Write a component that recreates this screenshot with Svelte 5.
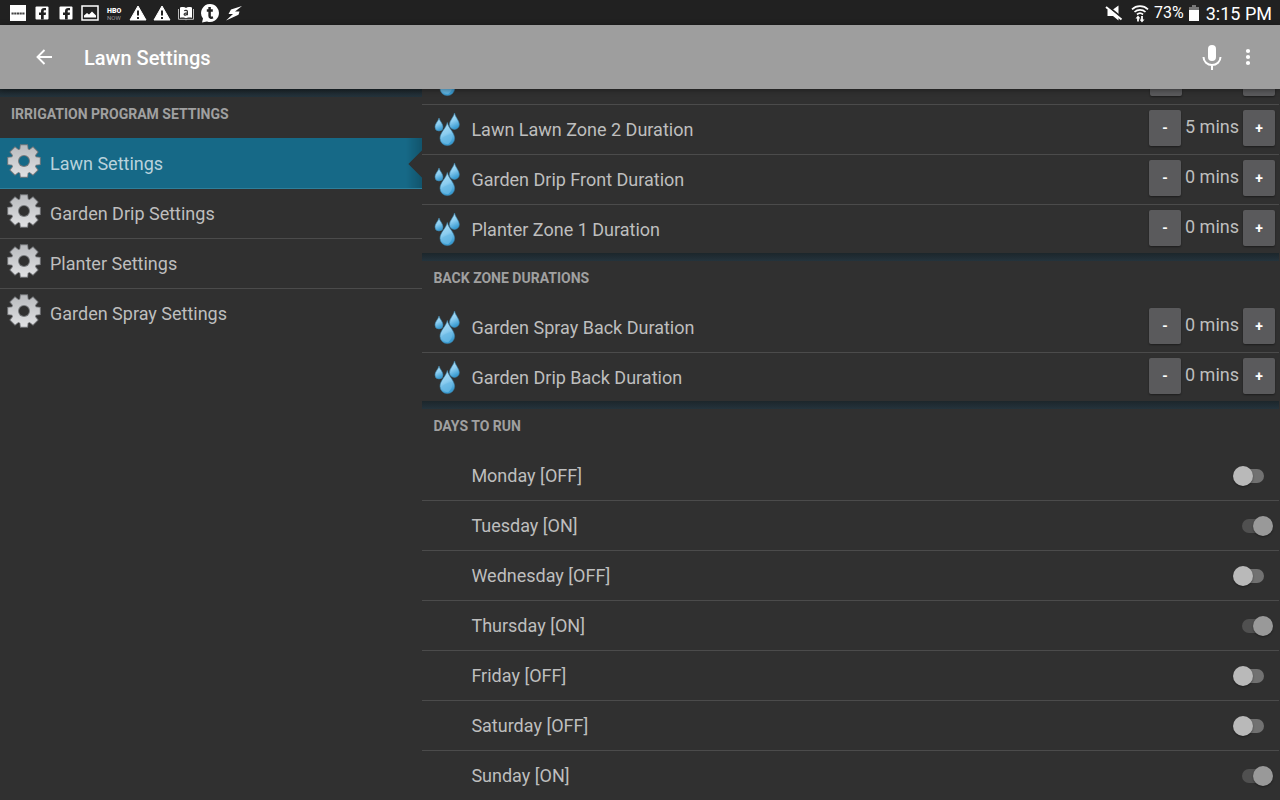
<script>
  const programs = ['Lawn Settings', 'Garden Drip Settings', 'Planter Settings', 'Garden Spray Settings'];
  let selected = $state('Lawn Settings');

  let groups = $state([
    {
      title: '',
      zones: [
        { name: '', mins: 0 },
        { name: 'Lawn Lawn Zone 2 Duration', mins: 5 },
        { name: 'Garden Drip Front Duration', mins: 0 },
        { name: 'Planter Zone 1 Duration', mins: 0 }
      ]
    },
    {
      title: 'BACK ZONE DURATIONS',
      zones: [
        { name: 'Garden Spray Back Duration', mins: 0 },
        { name: 'Garden Drip Back Duration', mins: 0 }
      ]
    }
  ]);

  let days = $state([
    { name: 'Monday', on: false },
    { name: 'Tuesday', on: true },
    { name: 'Wednesday', on: false },
    { name: 'Thursday', on: true },
    { name: 'Friday', on: false },
    { name: 'Saturday', on: false },
    { name: 'Sunday', on: true }
  ]);

  const teeth = [0, 45, 90, 135, 180, 225, 270, 315];
</script>

<svg class="defs" width="0" height="0" aria-hidden="true">
  <defs>
    <linearGradient id="metal" x1="0" y1="0" x2="0" y2="1">
      <stop offset="0" stop-color="#b6b8bb" />
      <stop offset="1" stop-color="#e2e3e5" />
    </linearGradient>
    <linearGradient id="water" x1="0" y1="0" x2="0.3" y2="1">
      <stop offset="0" stop-color="#b5e2f7" />
      <stop offset="0.55" stop-color="#8ccdf0" />
      <stop offset="1" stop-color="#3a9cd2" />
    </linearGradient>
    <mask id="rim" maskUnits="userSpaceOnUse" x="0" y="0" width="36" height="36">
      <circle cx="18" cy="18" r="13" fill="#fff" />
      {#each teeth as a}
        <path d="M13.300 8 L14 1.200 H22 L22.700 8Z" fill="#fff" transform="rotate({a} 18 18)" />
      {/each}
      <circle cx="18" cy="18" r="5" fill="#000" />
    </mask>
    <mask id="face" maskUnits="userSpaceOnUse" x="0" y="0" width="36" height="36">
      <circle cx="18" cy="18" r="12.300" fill="#fff" />
      {#each teeth as a}
        <path d="M14 8 L14.800 2.200 H21.200 L22 8Z" fill="#fff" transform="rotate({a} 18 18)" />
      {/each}
      <circle cx="18" cy="18" r="6" fill="#000" />
    </mask>
  </defs>
</svg>

{#snippet gear()}
  <svg class="gear" width="36" height="36" viewBox="0 0 36 36" aria-hidden="true">
    <rect width="36" height="36" fill="#77797c" mask="url(#rim)" />
    <rect width="36" height="36" fill="url(#metal)" mask="url(#face)" />
  </svg>
{/snippet}

{#snippet drops()}
  <svg class="drops" width="28" height="36" viewBox="0 0 28 36" aria-hidden="true">
    <g fill="url(#water)" stroke="#3b85ad" stroke-width="0.6">
      <path d="M6 6 C5.4 9 2 11.500 2 15 a4 4 0 0 0 8 0 C10 11.500 6.600 9 6 6Z" />
      <path d="M21.500 1 C20.800 5 16.500 8.500 16.500 12.500 a4.900 4.900 0 0 0 9.800 0 C26.300 8.500 22.200 5 21.500 1Z" />
      <path d="M14.300 10.500 C13.300 16 7 20.500 7 26.300 a7.300 7.300 0 0 0 14.600 0 C21.600 20.500 15.300 16 14.300 10.500Z" />
    </g>
    <path d="M8.500 27 a5.800 5.800 0 0 0 7 5 C19 29 20 25 18.500 22 C15 23 11 24 8.500 27Z" fill="#6cbbe6" opacity="0.7" />
  </svg>
{/snippet}

<div class="screen">
  <div class="status">
    <div class="notices">
      <svg width="16" height="18" viewBox="0 0 16 18"><path fill="#fff" d="M0 1h16v16H0z" /><path d="M1.500 9.500h13" stroke="#444" stroke-width="1.800" stroke-dasharray="2.200 .5" /></svg>
      {#each [1, 2] as n (n)}
        <svg width="16" height="18" viewBox="0 0 16 18"><rect x="1.500" y="2.500" width="13" height="13" rx="1" fill="#fff" /><path d="M7 15.500V11H5V8.600h2V7.200C7 5 8.200 4 10.200 4H12v2.300h-1.300c-.8 0-1 .4-1 1v1.300H12L11.700 11h-2v4.500z" fill="#222" /></svg>
      {/each}
      <svg width="18" height="18" viewBox="0 0 18 18"><rect x="1" y="2" width="16" height="14" fill="none" stroke="#fff" stroke-width="1.500" /><path d="M3 13.500V11.500l3-2.500 2 1.500L11 7.500l4 4v2z" fill="#fff" /></svg>
      <svg width="16" height="18" viewBox="0 0 16 18" font-family="Roboto, sans-serif" fill="#fff"><text x="1" y="9" font-size="7" font-weight="900">HBO</text><text x="1" y="16" font-size="6" fill="#999">NOW</text></svg>
      {#each [1, 2] as n (n)}
        <svg width="18" height="18" viewBox="0 0 18 18"><path d="M9 2 17 16H1z" fill="#fff" stroke="#fff" stroke-linejoin="round" /><path d="M9 6.500v5M9 13v2" stroke="#222" stroke-width="2" /></svg>
      {/each}
      <svg width="18" height="18" viewBox="0 0 18 18"><path d="M1.500 5v10.300H8l1 .7 1-.7h6.500V5" fill="none" stroke="#bbb" /><path d="M3 3.500c3-.8 5-.5 6 .5 1-1 3-1.300 6-.5v10.200c-3-.6-5-.2-6 .7-1-.9-3-1.300-6-.7z" fill="#fff" /><path d="M7.200 6.800c1.200-.8 3.200-.5 3.200.8v3.600M10.400 8.800c-3.800-.2-4 2.500-2 2.300l2-.8" fill="none" stroke="#333" stroke-width="1.200" /></svg>
      <svg width="20" height="20" viewBox="0 0 20 20"><path d="M10 1a9 9 0 1 1-3 17.500L2 19.500 3 15.500A9 9 0 0 1 10 1z" fill="#fff" /><path d="M9.600 4v9c0 1.800 1.500 2 3.400 1.400M6.800 7.600h6" fill="none" stroke="#222" stroke-width="2.500" /></svg>
      <svg width="18" height="18" viewBox="0 0 18 18"><path d="M17 2 6 5.500 3.500 10H8L1 16.500 13.500 10.800 14.500 7.500H10z" fill="#fff" /></svg>
    </div>
    <div class="system">
      <svg width="18" height="18" viewBox="0 0 18 18"><path d="M2.500 5.500H8l5.500-4v15L8 12H2.500z" fill="#fff" /><path d="M2 1.500 17.500 14.500" stroke="#222" stroke-width="2" /><path d="M1 3 16.500 15.500" stroke="#fff" stroke-width="2" /></svg>
      <svg class="wifi" width="18" height="20" viewBox="0 0 18 20"><g fill="none" stroke="#fff" stroke-width="1.700"><path d="M1 6.300a11.500 11.500 0 0 1 16 0M3.500 9a8 8 0 0 1 11 0M6 11.500a4.500 4.500 0 0 1 6 0" /></g><path d="M7 12.500 9.500 15.500H7.900v3H6.100v-3H4.500zM11 19.500l-2.500-3h1.600V13h1.800v3.500h1.600z" fill="#fff" /></svg>
      <span class="percent">73%</span>
      <svg class="battery" width="10" height="18" viewBox="0 0 10 18"><path d="M3 1h4v2h3v4H0V3h3z" fill="#777" /><path d="M0 6h10v11H0z" fill="#fff" /></svg>
      <span class="clock">3:15 PM</span>
    </div>
  </div>

  <header class="appbar">
    <button class="icon" aria-label="Back">
      <svg width="24" height="24" viewBox="0 0 24 24"><path d="M20 12H5.500M12.500 5 5.500 12l7 7" fill="none" stroke="#fff" stroke-width="1.900" /></svg>
    </button>
    <h1>Lawn Settings</h1>
    <button class="icon" aria-label="Voice input">
      <svg width="24" height="28" viewBox="0 0 24 28"><rect x="8" y="2" width="8" height="16" rx="4" fill="#fff" /><path d="M3.500 14a8.500 8 0 0 0 17 0M12 22v5" fill="none" stroke="#fff" stroke-width="2" /></svg>
    </button>
    <button class="icon" aria-label="More options">
      <svg width="24" height="24" viewBox="0 0 24 24" fill="#fff"><circle cx="12" cy="6" r="2.100" /><circle cx="12" cy="12" r="2.100" /><circle cx="12" cy="18" r="2.100" /></svg>
    </button>
  </header>

  <div class="panes">
    <nav>
      <h2>IRRIGATION PROGRAM SETTINGS</h2>
      <ul>
        {#each programs as name}
          <li>
            <button class="program" class:selected={selected === name} onclick={() => (selected = name)}>
              {@render gear()}<span>{name}</span>
            </button>
          </li>
        {/each}
      </ul>
    </nav>

    <main>
      <div class="list">
        {#each groups as group}
          <section>
            {#if group.title}<h2>{group.title}</h2>{/if}
            <ul>
              {#each group.zones as zone}
                <li class="row">
                  {@render drops()}
                  <span class="name">{zone.name}</span>
                  <button class="step" aria-label="Decrease" onclick={() => (zone.mins = Math.max(0, zone.mins - 1))}>{zone.name ? '-' : ''}</button>
                  <output>{zone.name ? `${zone.mins} mins` : ''}</output>
                  <button class="step" aria-label="Increase" onclick={() => (zone.mins += 1)}>{zone.name ? '+' : ''}</button>
                </li>
              {/each}
            </ul>
          </section>
        {/each}
        <section>
          <h2>DAYS TO RUN</h2>
          <ul>
            {#each days as day}
              <li>
                <label class="row day">
                  <span class="name">{day.name} [{day.on ? 'ON' : 'OFF'}]</span>
                  <input type="checkbox" bind:checked={day.on} />
                </label>
              </li>
            {/each}
          </ul>
        </section>
      </div>
    </main>
  </div>
</div>

<style>
  :global(body) {
    margin: 0;
    background: #303030;
  }
  .defs {
    position: absolute;
  }
  .screen {
    display: flex;
    flex-direction: column;
    height: 100vh;
    overflow: hidden;
    background: #303030;
    color: #bebebe;
    font: 18px/24px Roboto, sans-serif;
  }
  svg {
    display: block;
    flex: none;
  }
  button {
    border: 0;
    padding: 0;
    font: inherit;
    color: inherit;
    background: none;
    cursor: pointer;
  }
  ul {
    list-style: none;
    margin: 0;
    padding: 0;
  }

  .status {
    display: flex;
    flex: none;
    justify-content: space-between;
    align-items: center;
    height: 25px;
    padding: 0 8px 0 6px;
    background: #212121;
    color: #fff;
  }
  .notices {
    display: grid;
    grid-auto-flow: column;
    grid-auto-columns: 24px;
    place-items: center;
  }
  .system {
    display: flex;
    align-items: center;
    gap: 5px;
  }
  .wifi {
    margin-left: 3px;
  }
  .percent {
    font-size: 16px;
  }
  .clock {
    font-size: 18px;
    padding-top: 3px;
    margin-left: 2px;
  }

  .appbar {
    display: flex;
    flex: none;
    align-items: center;
    height: 64px;
    padding: 0 20px 0 32px;
    background: #9e9e9e;
    color: #fff;
    position: relative;
    z-index: 1;
    box-shadow: 0 1px 6px rgba(0, 0, 0, 0.4);
  }
  h1 {
    flex: 1;
    margin: 0 0 0 28px;
    padding-top: 2px;
    font-size: 20px;
    font-weight: 500;
  }
  .icon + .icon {
    margin-left: 12px;
  }

  .panes {
    display: flex;
    flex: 1;
    min-height: 0;
  }
  nav {
    flex: 0 0 33%;
  }
  main {
    flex: 1;
    overflow: hidden;
    padding-right: 1px;
  }
  .list {
    margin-top: -34px;
  }

  h2 {
    position: relative;
    box-sizing: border-box;
    height: 50px;
    margin: 0;
    padding: 13px 11px 0;
    background: linear-gradient(#1c262b, #24333c) 0 0 / 100% 8px no-repeat #303030;
    color: #a0a0a0;
    font-size: 14px;
    font-weight: 700;
    line-height: 24px;
  }
  section + section h2 {
    margin-top: -2px;
  }

  .program {
    display: flex;
    position: relative;
    box-sizing: border-box;
    width: 100%;
    height: 50px;
    padding-left: 6px;
    gap: 8px;
    border-bottom: 1px solid #4b4b4b;
    text-align: left;
  }
  .program span {
    line-height: 50px;
  }
  .gear {
    margin-top: 4px;
  }
  li:last-child .program {
    border-bottom-color: transparent;
  }
  .program.selected {
    height: 51px;
    margin-top: -1px;
    padding-top: 1px;
    background: linear-gradient(90deg, transparent calc(100% - 16px), rgba(0, 0, 0, 0.2)), #166987;
    border-bottom-color: #2d7f9b;
    color: #b9d2dc;
  }
  .selected::after {
    content: '';
    position: absolute;
    right: 0;
    top: 12px;
    width: 14px;
    height: 28px;
    background: #303030;
    clip-path: polygon(100% 0, 100% 100%, 0 50%);
  }

  .row {
    display: flex;
    align-items: center;
    box-sizing: border-box;
    height: 50px;
    padding: 0 4px 0 11px;
    border-bottom: 1px solid #4b4b4b;
  }
  .name {
    flex: 1;
    padding-left: 10px;
  }
  .day {
    padding: 0 6px 0 39px;
  }
  output {
    min-width: 53px;
    margin: 0 4px;
    padding-bottom: 5px;
  }
  .step + output + .step,
  .step {
    width: 32px;
    height: 36px;
    margin-bottom: 3px;
    border-radius: 2px;
    background: #5a5a5c;
    box-shadow: 0 1px 2px rgba(0, 0, 0, 0.4);
    color: #fff;
    font-size: 14px;
    font-weight: 700;
  }

  input {
    appearance: none;
    position: relative;
    width: 40px;
    height: 20px;
    margin: 0;
    cursor: pointer;
  }
  input::before,
  input::after {
    content: '';
    position: absolute;
  }
  input::before {
    left: 3px;
    top: 3px;
    width: 28px;
    height: 14px;
    border-radius: 7px;
    background: #717171;
  }
  input::after {
    left: 0;
    top: 0;
    width: 20px;
    height: 20px;
    border-radius: 50%;
    background: #b9b9b9;
    box-shadow: 0 1px 2px rgba(0, 0, 0, 0.4);
  }
  input:checked::before {
    left: 9px;
    background: #505050;
  }
  input:checked::after {
    left: 20px;
    background: #999;
  }
</style>
